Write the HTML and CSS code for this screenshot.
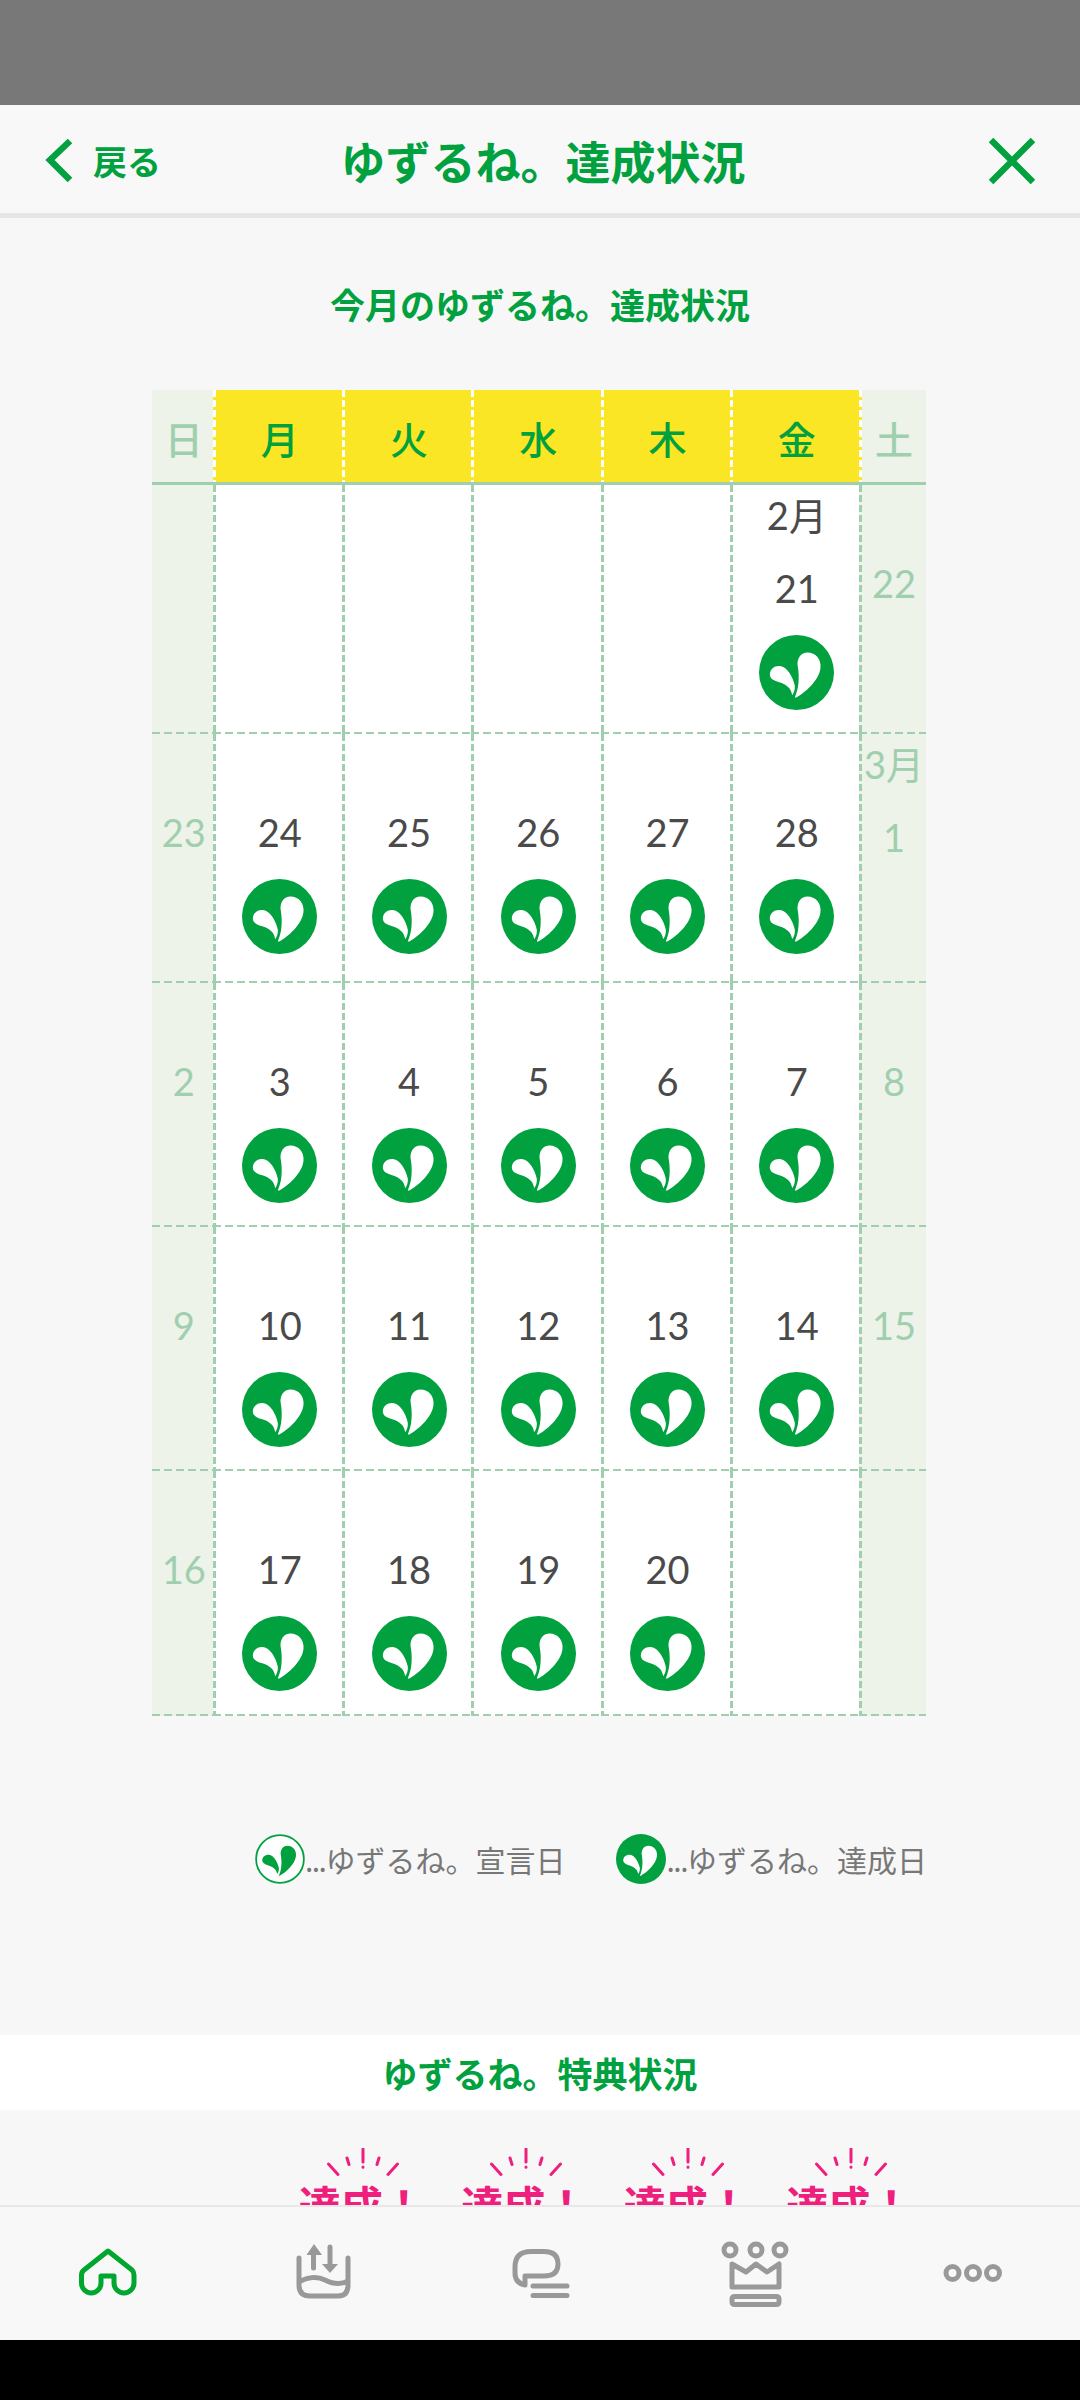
FILE: index.html
```html
<!DOCTYPE html>
<html lang="ja">
<head>
    <meta charset="UTF-8">
    <meta name="viewport" content="width=device-width, initial-scale=1.0">
    <title>ゆずるね。達成状況</title>
    <link rel="stylesheet" href="styles.css">
</head>
<body>
    <svg class="defs" width="0" height="0">
        <symbol id="leaf" viewBox="0 0 222 222">
            <path d="M106 184C118 160 120 125 115 95C110 70 125 52 143 52C168 52 185 72 182 98C178 135 135 172 112 184Q107 186 106 184Z"/>
            <path d="M32 117C32 100 48 90 62 92C85 95 100 125 106 150C107 160 104 172 98 178C96 160 85 148 60 140C42 135 32 128 32 117Z"/>
        </symbol>
        <symbol id="done" viewBox="0 0 222 222">
            <circle cx="111" cy="111" r="111" fill="#00a13e"/>
            <use href="#leaf" width="222" height="222" fill="#fff"/>
        </symbol>
        <symbol id="rays" viewBox="0 0 80 30">
            <path d="M40 1V14M40 19V19.2M24 10L26 16.5M56 10L54 16.5M5.5 16L15 26.500M74.500 16L65 26.500"/>
        </symbol>
    </svg>

    <div class="page">
        <div class="status"></div>

        <header class="topbar">
            <a class="back">
                <svg class="back-icon" viewBox="0 0 30 46"><path d="M25 3L5 22L25 42"/></svg>
                <span>戻る</span>
            </a>
            <h1>ゆずるね。達成状況</h1>
            <svg class="close" viewBox="0 0 46 46"><path d="M2 2L44 44M44 2L2 44"/></svg>
        </header>

        <main class="content">
            <h2 class="month-title">今月のゆずるね。達成状況</h2>

            <div class="calendar">
                <div class="head off">日</div>
                <div class="head">月</div>
                <div class="head">火</div>
                <div class="head">水</div>
                <div class="head">木</div>
                <div class="head">金</div>
                <div class="head off sat">土</div>

                <div class="cell off"></div>
                <div class="cell"></div>
                <div class="cell"></div>
                <div class="cell"></div>
                <div class="cell"></div>
                <div class="cell has-month"><span class="month">2月</span><span class="day">21</span><svg class="badge"><use href="#done"/></svg></div>
                <div class="cell off sat"><span class="day">22</span></div>

                <div class="cell off"><span class="day">23</span></div>
                <div class="cell"><span class="day">24</span><svg class="badge"><use href="#done"/></svg></div>
                <div class="cell"><span class="day">25</span><svg class="badge"><use href="#done"/></svg></div>
                <div class="cell"><span class="day">26</span><svg class="badge"><use href="#done"/></svg></div>
                <div class="cell"><span class="day">27</span><svg class="badge"><use href="#done"/></svg></div>
                <div class="cell"><span class="day">28</span><svg class="badge"><use href="#done"/></svg></div>
                <div class="cell off sat has-month"><span class="month">3月</span><span class="day">1</span></div>

                <div class="cell off"><span class="day">2</span></div>
                <div class="cell"><span class="day">3</span><svg class="badge"><use href="#done"/></svg></div>
                <div class="cell"><span class="day">4</span><svg class="badge"><use href="#done"/></svg></div>
                <div class="cell"><span class="day">5</span><svg class="badge"><use href="#done"/></svg></div>
                <div class="cell"><span class="day">6</span><svg class="badge"><use href="#done"/></svg></div>
                <div class="cell"><span class="day">7</span><svg class="badge"><use href="#done"/></svg></div>
                <div class="cell off sat"><span class="day">8</span></div>

                <div class="cell off"><span class="day">9</span></div>
                <div class="cell"><span class="day">10</span><svg class="badge"><use href="#done"/></svg></div>
                <div class="cell"><span class="day">11</span><svg class="badge"><use href="#done"/></svg></div>
                <div class="cell"><span class="day">12</span><svg class="badge"><use href="#done"/></svg></div>
                <div class="cell"><span class="day">13</span><svg class="badge"><use href="#done"/></svg></div>
                <div class="cell"><span class="day">14</span><svg class="badge"><use href="#done"/></svg></div>
                <div class="cell off sat"><span class="day">15</span></div>

                <div class="cell off"><span class="day">16</span></div>
                <div class="cell"><span class="day">17</span><svg class="badge"><use href="#done"/></svg></div>
                <div class="cell"><span class="day">18</span><svg class="badge"><use href="#done"/></svg></div>
                <div class="cell"><span class="day">19</span><svg class="badge"><use href="#done"/></svg></div>
                <div class="cell"><span class="day">20</span><svg class="badge"><use href="#done"/></svg></div>
                <div class="cell"></div>
                <div class="cell off sat"></div>
            </div>

            <div class="legend">
                <div class="legend-item">
                    <svg class="legend-icon declared" viewBox="0 0 222 222">
                        <circle cx="111" cy="111" r="106"/>
                        <use href="#leaf" width="222" height="222"/>
                    </svg>
                    <span><span class="dots">...</span>ゆずるね。宣言日</span>
                </div>
                <div class="legend-item">
                    <svg class="legend-icon"><use href="#done"/></svg>
                    <span><span class="dots">...</span>ゆずるね。達成日</span>
                </div>
            </div>

            <h2 class="perk-title">ゆずるね。特典状況</h2>

            <div class="perks">
                <div class="perk"><svg class="rays"><use href="#rays"/></svg><span>達成！</span></div>
                <div class="perk"><svg class="rays"><use href="#rays"/></svg><span>達成！</span></div>
                <div class="perk"><svg class="rays"><use href="#rays"/></svg><span>達成！</span></div>
                <div class="perk"><svg class="rays"><use href="#rays"/></svg><span>達成！</span></div>
            </div>
        </main>

        <nav class="tabbar">
            <svg class="tab home" viewBox="-2 5 80 80"><path d="M38 21L62 40Q64 42 64 45V53A10 10 0 0 1 44 53V46H31V53A9.750 10 0 0 1 11.500 53V45Q11.500 42 14 40Z"/></svg>
            <svg class="tab" viewBox="-1 0 80 80">
                <path d="M14 23V50Q14 61 25 61H53Q63 61 63 50V23M14 47C22 42 32 41 40 45S56 50 63 46M28.500 33V18M45 12V30"/>
                <path class="solid" d="M21.500 20L29 9L37 20ZM37 29H53L45 38Z"/>
            </svg>
            <svg class="tab" viewBox="0 0 80 80"><path d="M15 32Q15 16.500 31 16.500H44Q58 16.500 58 29Q58 41 44 41H25V50Q15 48 15 38ZM33 51H67M33 60.500H67"/></svg>
            <svg class="tab" viewBox="1 -1 80 80">
                <circle cx="15" cy="14" r="6"/>
                <circle cx="41" cy="14" r="6"/>
                <circle cx="65" cy="14" r="6"/>
                <path d="M17 28L31 36L41 28L52 36L64 28V51H17ZM20 60.500H61Q64 60.500 64 63V66Q64 68.500 61 68.500H20Q17 68.500 17 66V63Q17 60.500 20 60.500Z"/>
            </svg>
            <svg class="tab" viewBox="-3 0 80 80">
                <circle cx="17.500" cy="38" r="6.500"/>
                <circle cx="38" cy="38" r="6.500"/>
                <circle cx="58" cy="38" r="6.500"/>
            </svg>
        </nav>

        <div class="system"></div>
    </div>
</body>
</html>
```

FILE: styles.css
```css
* {
    box-sizing: border-box;
}
body {
    margin: 0;
    font-family: "Noto Sans CJK JP", sans-serif;
    background-color: #f7f7f7;
}
h1, h2 {
    margin: 0;
}
.defs {
    display: block;
    height: 0;
}
.page {
    width: 1080px;
    height: 2400px;
    display: flex;
    flex-direction: column;
    overflow: hidden;
}
.status {
    height: 105px;
    background-color: #787878;
}
.system {
    height: 60px;
    background-color: #000;
}

/* top bar */
.topbar {
    height: 113px;
    padding: 3px 45px 0;
    display: grid;
    grid-template-columns: 1fr auto 1fr;
    align-items: center;
    background-color: #f8f8f8;
    border-bottom: 5px solid #e6e6e6;
    color: #00a13e;
}
.topbar h1 {
    font-size: 45px;
    font-weight: 700;
    line-height: 60px;
    padding-left: 6px;
}
.back {
    display: flex;
    align-items: center;
    gap: 18px;
    font-size: 34px;
    font-weight: 700;
}
.back-icon {
    width: 30px;
    height: 46px;
    fill: none;
    stroke: #00a13e;
    stroke-width: 6.500;
}
.close {
    width: 46px;
    height: 46px;
    justify-self: end;
    fill: none;
    stroke: #00a13e;
    stroke-width: 6.500;
}

/* calendar */
.content {
    height: 1987px;
    overflow: hidden;
}
.month-title {
    margin: 59px 0 59px;
    height: 54px;
    line-height: 54px;
    text-align: center;
    font-size: 35px;
    font-weight: 700;
    color: #00a13e;
}
.calendar {
    --line: #9fcfae;
    --dash-white: repeating-linear-gradient(to bottom, #fff 0 7px, transparent 7px 10px);
    --dash-v: repeating-linear-gradient(to bottom, var(--line) 0 7px, transparent 7px 10px);
    --dash-h: repeating-linear-gradient(to right, var(--line) 0 8px, transparent 8px 12px);
    margin-left: 152px;
    width: 774px;
    display: grid;
    grid-template-columns: 60.750px repeat(5, 129.250px) 67px;
    grid-template-rows: 95px 249px 249px 244px 244px 245px;
}
.head {
    display: flex;
    align-items: center;
    justify-content: center;
    padding: 3px 0 0 5px;
    font-size: 38px;
    font-weight: 500;
    color: #00a13e;
    background: var(--dash-white) left top / 3px 100% no-repeat, #fbe625;
    border-bottom: 3px solid var(--line);
}
.head.off {
    color: #9fcfae;
    background: #edf3e8;
    padding-left: 3px;
}
.head.sat {
    background: var(--dash-white) left top / 3px 100% no-repeat, linear-gradient(90deg, #fbe625 3px, #edf3e8 3px);
}
.cell {
    padding: 59px 0 0 5px;
    display: flex;
    flex-direction: column;
    align-items: center;
    color: #4a4a4a;
    background: var(--dash-v) left top / 3px 100% no-repeat, var(--dash-h) left bottom / 100% 2px no-repeat, #fff;
}
.cell.off {
    padding-left: 3px;
    color: #9fcfae;
    background: var(--dash-h) left bottom / 100% 2px no-repeat, #edf3e8;
}
.cell.sat {
    background: var(--dash-v) left top / 3px 100% no-repeat, var(--dash-h) left bottom / 100% 2px no-repeat, #edf3e8;
}
.cell.has-month {
    padding-top: 0;
}
.month {
    height: 64px;
    line-height: 60px;
    font-family: Lato, "Noto Sans CJK JP", sans-serif;
    font-size: 38px;
}
.day {
    height: 78px;
    line-height: 78px;
    font-family: Lato, sans-serif;
    font-size: 38px;
}
.badge {
    width: 75px;
    height: 75px;
    margin-top: 8px;
    flex-shrink: 0;
}

/* legend */
.legend {
    margin-top: 118px;
    padding-right: 153px;
    display: flex;
    justify-content: flex-end;
    gap: 51px;
    height: 49px;
    color: #777;
    font-size: 30px;
}
.legend-item {
    display: flex;
    align-items: center;
}
.legend-icon {
    width: 50px;
    height: 50px;
}
.legend-icon.declared {
    fill: #00a13e;
}
.legend-icon.declared circle {
    fill: #fff;
    stroke: #00a13e;
    stroke-width: 8;
}
.dots {
    letter-spacing: -1.500px;
}

/* perks */
.perk-title {
    margin-top: 152px;
    height: 75px;
    line-height: 75px;
    text-align: center;
    font-size: 35px;
    font-weight: 700;
    color: #00a13e;
    background-color: #fff;
}
.perks {
    padding: 38px 0 0 282px;
    display: flex;
    color: #ee1f7d;
}
.perk {
    width: 162.500px;
    flex-shrink: 0;
    display: flex;
    flex-direction: column;
    align-items: center;
    font-size: 42px;
    font-weight: 700;
    line-height: 52px;
}
.perk span {
    padding-right: 3px;
}
.rays {
    width: 80px;
    height: 30px;
    fill: none;
    stroke: #ee1f7d;
    stroke-width: 3;
    stroke-linecap: round;
}

/* bottom tabs */
.tabbar {
    height: 135px;
    padding-top: 28px;
    display: grid;
    grid-template-columns: repeat(5, 216px);
    justify-items: center;
    background-color: #f8f8f8;
    border-top: 2px solid #e8e8e8;
}
.tab {
    width: 80px;
    height: 80px;
    fill: none;
    stroke: #999;
    stroke-width: 5;
    stroke-linecap: round;
    stroke-linejoin: round;
}
.tab .solid {
    fill: #999;
    stroke: none;
}
.tab.home {
    stroke: #00a62e;
}
```
